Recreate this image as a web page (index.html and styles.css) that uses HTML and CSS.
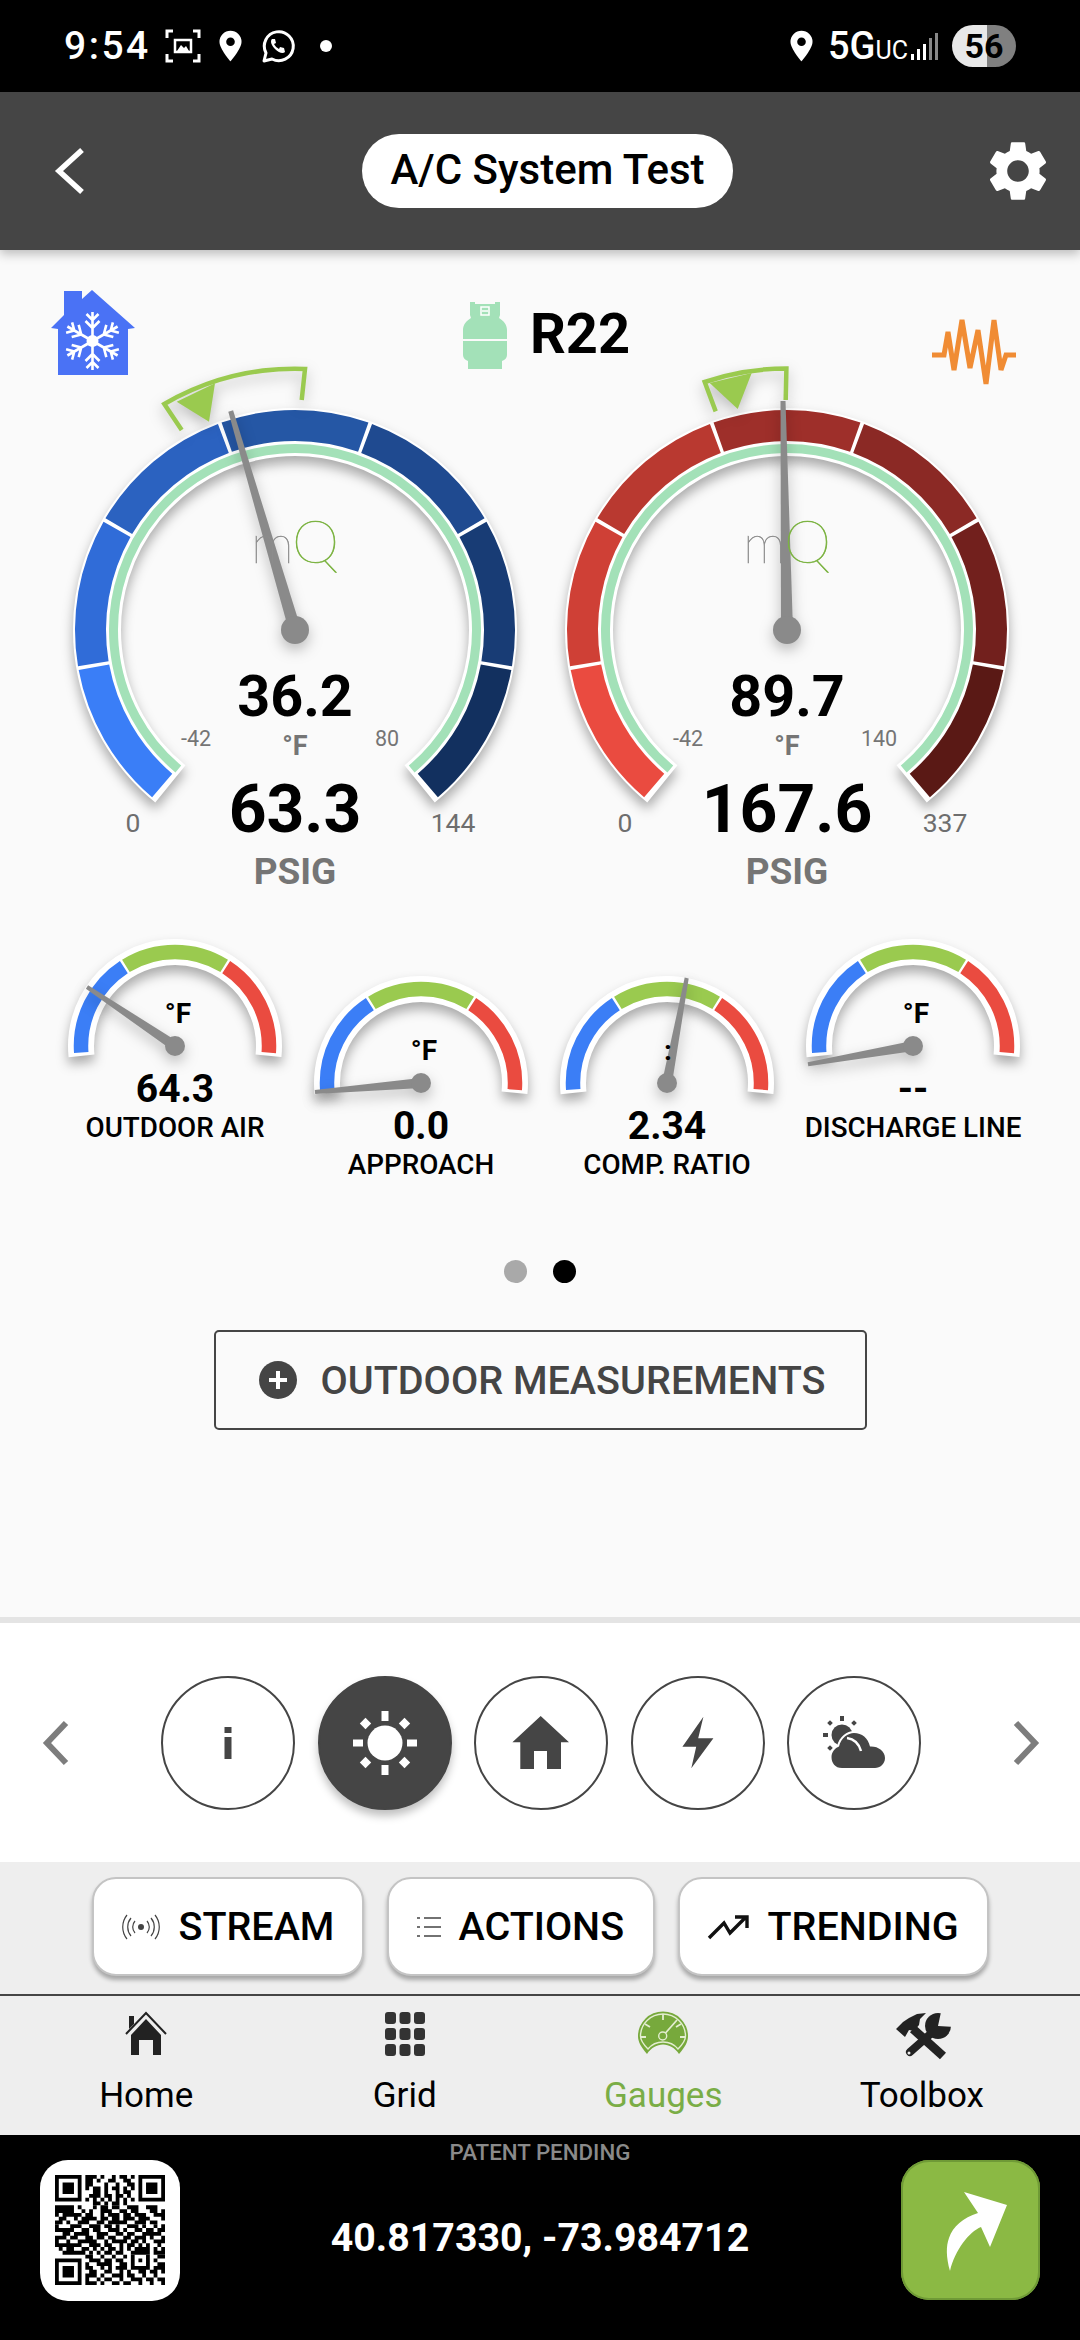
FILE: index.html
```html
<!DOCTYPE html>
<html lang="en">

<head>
    <meta charset="UTF-8">
    <meta name="viewport" content="width=device-width, initial-scale=1.0">
    <link rel="stylesheet" href="styles.css">
    <title>A/C System Test</title>
</head>

<body>
<div id="page">

    <!-- status bar -->
    <div class="status">
        <span class="clock">9:54</span>
        <svg class="st-shot" viewBox="0 0 36 34" fill="none" stroke="#fff" stroke-width="3">
            <path d="M8 2H2v7M28 2h6v7M8 32H2v-7M28 32h6v-7"/>
            <path d="M10 11h16v12H10z" stroke-width="2.5"/>
            <path d="M12 22l4-6 3 3 2-2 3 5z" fill="#fff" stroke="none"/>
        </svg>
        <svg class="st-pin" viewBox="0 0 24 32"><path fill="#fff" fill-rule="evenodd" d="M12 0a11.500 11.500 0 0 1 11.500 11.500C23.500 19 12 32 12 32S.5 19 .5 11.500A11.500 11.500 0 0 1 12 0zm0 7a4.500 4.500 0 1 0 0 9 4.500 4.500 0 0 0 0-9z"/></svg>
        <svg class="st-wa" viewBox="0 0 34 35" fill="none">
            <path d="M3 32l2-8A14.500 14.500 0 1 1 11 30z" stroke="#fff" stroke-width="3" stroke-linejoin="round"/>
            <path d="M11 10c-2 2-1 6 3 10s8 5 10 3l-1-4-4-1-1 2c-2-1-4-3-5-5l2-1-1-4z" fill="#fff"/>
        </svg>
        <span class="st-dot"></span>
        <span class="st-space"></span>
        <svg class="st-pin st-pin-r" viewBox="0 0 24 32"><path fill="#fff" fill-rule="evenodd" d="M12 0a11.500 11.500 0 0 1 11.500 11.500C23.500 19 12 32 12 32S.5 19 .5 11.500A11.500 11.500 0 0 1 12 0zm0 7a4.500 4.500 0 1 0 0 9 4.500 4.500 0 0 0 0-9z"/></svg>
        <span class="net">5G<small>UC</small></span>
        <svg class="st-signal" viewBox="0 0 27 27" fill="#fff">
            <rect x="0" y="21" width="3" height="6"/>
            <rect x="6" y="16" width="3" height="11"/>
            <rect x="12" y="11" width="3" height="16"/>
            <rect x="18" y="5" width="3" height="22" fill="#888"/>
            <rect x="24" y="0" width="3" height="27" fill="#888"/>
        </svg>
        <span class="batt">56</span>
    </div>

    <!-- app bar -->
    <div class="appbar">
        <svg class="back" viewBox="0 0 30 46" fill="none" stroke="#fff" stroke-width="5.500"><path d="M27 2L4 23l23 21"/></svg>
        <span class="title">A/C System Test</span>
        <svg class="gear" viewBox="0 0 24 24"><path fill="#fff" d="M19.14,12.94c0.04-0.3,0.06-0.61,0.06-0.94c0-0.32-0.02-0.64-0.07-0.94l2.03-1.58c0.18-0.14,0.23-0.41,0.12-0.61 l-1.92-3.32c-0.12-0.22-0.37-0.29-0.59-0.22l-2.39,0.96c-0.5-0.38-1.03-0.7-1.62-0.94L14.4,2.81c-0.04-0.24-0.24-0.41-0.48-0.41 h-3.84c-0.24,0-0.43,0.17-0.47,0.41L9.25,5.35C8.66,5.59,8.12,5.92,7.63,6.29L5.24,5.33c-0.22-0.08-0.47,0-0.59,0.22L2.74,8.87 C2.62,9.08,2.66,9.34,2.86,9.48l2.03,1.58C4.84,11.36,4.8,11.69,4.8,12s0.02,0.64,0.07,0.94l-2.03,1.58 c-0.18,0.14-0.23,0.41-0.12,0.61l1.92,3.32c0.12,0.22,0.37,0.29,0.59,0.22l2.39-0.96c0.5,0.38,1.03,0.7,1.62,0.94l0.36,2.54 c0.05,0.24,0.24,0.41,0.48,0.41h3.84c0.24,0,0.44-0.17,0.47-0.41l0.36-2.54c0.59-0.24,1.13-0.56,1.62-0.94l2.39,0.96 c0.22,0.08,0.47,0,0.59-0.22l1.92-3.32c0.12-0.22,0.07-0.47-0.12-0.61L19.14,12.94z M12,15.6c-1.98,0-3.6-1.62-3.6-3.6 s1.62-3.6,3.6-3.6s3.6,1.62,3.6,3.6S13.98,15.6,12,15.6z"/></svg>
    </div>

    <div class="main">
        <!-- refrigerant header -->
        <div class="head">
            <svg class="house" viewBox="0 0 84 85">
                <path fill="#4a72f5" d="M13 1h18v8L41 0l43 38-7 1v46H7V39l-7-1 13-13z"/>
                <g stroke="#fff" stroke-width="2.600" fill="none">
                    <g id="arm">
                        <path d="M41.500 51V22M41.500 30l-6-6M41.500 30l6-6M41.500 38l-7-7M41.500 38l7-7" stroke-width="2.600"/>
                    </g>
                    <use href="#arm" transform="rotate(60 41.500 51)"/>
                    <use href="#arm" transform="rotate(120 41.500 51)"/>
                    <use href="#arm" transform="rotate(180 41.500 51)"/>
                    <use href="#arm" transform="rotate(240 41.500 51)"/>
                    <use href="#arm" transform="rotate(300 41.500 51)"/>
                </g>
                <circle cx="41.500" cy="51" r="6" fill="#fff"/>
            </svg>
            <div class="refrig">
                <svg class="tank" viewBox="0 0 44 67">
                    <path fill="#a3e1b8" d="M7 0h5v2h20V0h5v13l-1 3c5 3 8 7 8 12v9h-44v-9c0-5 3-9 8-12l-1-3z"/>
                    <path fill="#a3e1b8" d="M0 39h44v14c0 3-2 5-5 6v8H5v-8c-3-1-5-3-5-6z"/>
                    <path fill="none" stroke="#fff" stroke-width="1.500" d="M18 5h8v8h-8zM19 9h6"/>
                </svg>
                <span class="r22">R22</span>
            </div>
            <svg class="wave" viewBox="0 0 84 68" fill="none" stroke="#f08c34" stroke-width="5">
                <polyline points="0,37 12,37 16,14 22,52 30,2 38,50 46,12 54,66 62,2 69,52 74,37 84,37"/>
            </svg>
        </div>

        <!-- big gauges -->
        <div class="bigrow">
            <svg class="big" viewBox="-246 -270 492 540">
                <g class="lift">
                    <circle class="rim" r="198" stroke-width="48" pathLength="360" stroke-dasharray="282 78" transform="rotate(129)"/>
                </g>
                <circle class="band" r="204.500" pathLength="360" stroke-dasharray="39 321" stroke="#3a7ef7" transform="rotate(130.500)"/>
                <circle class="band" r="204.500" pathLength="360" stroke-dasharray="39 321" stroke="#306cd8" transform="rotate(170.500)"/>
                <circle class="band" r="204.500" pathLength="360" stroke-dasharray="39 321" stroke="#2b62c0" transform="rotate(210.500)"/>
                <circle class="band" r="204.500" pathLength="360" stroke-dasharray="39 321" stroke="#2557a5" transform="rotate(250.500)"/>
                <circle class="band" r="204.500" pathLength="360" stroke-dasharray="39 321" stroke="#1f4a90" transform="rotate(290.500)"/>
                <circle class="band" r="204.500" pathLength="360" stroke-dasharray="39 321" stroke="#183c75" transform="rotate(330.500)"/>
                <circle class="band" r="204.500" pathLength="360" stroke-dasharray="39 321" stroke="#12305f" transform="rotate(10.500)"/>
                <circle class="ring" r="181.500" pathLength="360" stroke-dasharray="280 80" transform="rotate(130)"/>
                <g class="lift-s">
                    <path class="bracket" d="M-113.300-200L-130.700-226A261 261 0 0 1 10-261L6.700-230"/>
                    <path class="tri" d="M-118.300-228.300L-80-246.700L-86-208.300z"/>
                </g>
                <g class="lift-s">
                    <polygon class="needle" points="-61.900,-219.700 -66.700,-218.300 -5.800,1.700 5.800,-1.700"/>
                    <circle class="needle" r="14"/>
                </g>
                <text class="logo-m" x="-44" y="-67.500">m</text>
                <text class="logo-q" x="-3" y="-67.500">Q</text>
                <text class="t-val" y="86">36.2</text>
                <text class="t-unit" y="125">°F</text>
                <text class="t-press" y="202">63.3</text>
                <text class="t-psig" y="254">PSIG</text>
                <text class="t-in" x="-99" y="116">-42</text>
                <text class="t-in" x="92" y="116">80</text>
                <text class="t-out" x="-162" y="202">0</text>
                <text class="t-out" x="158" y="202">144</text>
            </svg>
            <svg class="big" viewBox="-246 -270 492 540">
                <g class="lift">
                    <circle class="rim" r="198" stroke-width="48" pathLength="360" stroke-dasharray="282 78" transform="rotate(129)"/>
                </g>
                <circle class="band" r="204.500" pathLength="360" stroke-dasharray="39 321" stroke="#ea4b40" transform="rotate(130.500)"/>
                <circle class="band" r="204.500" pathLength="360" stroke-dasharray="39 321" stroke="#cf4036" transform="rotate(170.500)"/>
                <circle class="band" r="204.500" pathLength="360" stroke-dasharray="39 321" stroke="#b93930" transform="rotate(210.500)"/>
                <circle class="band" r="204.500" pathLength="360" stroke-dasharray="39 321" stroke="#9e2f2a" transform="rotate(250.500)"/>
                <circle class="band" r="204.500" pathLength="360" stroke-dasharray="39 321" stroke="#8b2925" transform="rotate(290.500)"/>
                <circle class="band" r="204.500" pathLength="360" stroke-dasharray="39 321" stroke="#72201d" transform="rotate(330.500)"/>
                <circle class="band" r="204.500" pathLength="360" stroke-dasharray="39 321" stroke="#5a1915" transform="rotate(10.500)"/>
                <circle class="ring" r="181.500" pathLength="360" stroke-dasharray="280 80" transform="rotate(130)"/>
                <g class="lift-s">
                    <path class="bracket" d="M-71.300-218.600L-82.300-248A261 261 0 0 1-.6-261.400L-1.300-230"/>
                    <path class="tri" d="M-77.300-247L-35.300-257L-49.300-221z"/>
                </g>
                <g class="lift-s">
                    <polygon class="needle" points="-1.500,-229 -6.500,-229 -6,0 6,0"/>
                    <circle class="needle" r="14"/>
                </g>
                <text class="logo-m" x="-44" y="-67.500">m</text>
                <text class="logo-q" x="-3" y="-67.500">Q</text>
                <text class="t-val" y="86">89.7</text>
                <text class="t-unit" y="125">°F</text>
                <text class="t-press" y="202">167.6</text>
                <text class="t-psig" y="254">PSIG</text>
                <text class="t-in" x="-99" y="116">-42</text>
                <text class="t-in" x="92" y="116">140</text>
                <text class="t-out" x="-162" y="202">0</text>
                <text class="t-out" x="158" y="202">337</text>
            </svg>
        </div>

        <!-- small gauges -->
        <div class="smallrow">
            <div class="mini">
                <svg class="dial" viewBox="-123 -116 246 130">
                    <g class="lift"><circle class="rim" r="94" stroke-width="26" pathLength="360" stroke-dasharray="192 168" transform="rotate(174)"/></g>
                    <circle class="seg" r="94" pathLength="360" stroke-dasharray="61 299" stroke="#3b7ef6" transform="rotate(176)"/>
                    <circle class="seg" r="94" pathLength="360" stroke-dasharray="63 297" stroke="#9aca4f" transform="rotate(238.500)"/>
                    <circle class="seg" r="94" pathLength="360" stroke-dasharray="61 299" stroke="#ea4b40" transform="rotate(303)"/>
                    <text class="mini-unit" x="3" y="-23">°F</text>
                    <g class="lift-s">
                        <polygon class="needle" points="-86.900,-60.700 -89.100,-57.300 -2.800,4.200 2.800,-4.200"/>
                        <circle class="needle" r="10"/>
                    </g>
                </svg>
                <div class="mini-val">64.3</div>
                <div class="mini-lbl">OUTDOOR AIR</div>
            </div>
            <div class="mini low">
                <svg class="dial" viewBox="-123 -116 246 130">
                    <g class="lift"><circle class="rim" r="94" stroke-width="26" pathLength="360" stroke-dasharray="192 168" transform="rotate(174)"/></g>
                    <circle class="seg" r="94" pathLength="360" stroke-dasharray="61 299" stroke="#3b7ef6" transform="rotate(176)"/>
                    <circle class="seg" r="94" pathLength="360" stroke-dasharray="63 297" stroke="#9aca4f" transform="rotate(238.500)"/>
                    <circle class="seg" r="94" pathLength="360" stroke-dasharray="61 299" stroke="#ea4b40" transform="rotate(303)"/>
                    <text class="mini-unit" x="3" y="-23">°F</text>
                    <g class="lift-s">
                        <polygon class="needle" points="-105.800,11 -106.200,7 -.4,-5 .4,5"/>
                        <circle class="needle" r="10"/>
                    </g>
                </svg>
                <div class="mini-val">0.0</div>
                <div class="mini-lbl">APPROACH</div>
            </div>
            <div class="mini low">
                <svg class="dial" viewBox="-123 -116 246 130">
                    <g class="lift"><circle class="rim" r="94" stroke-width="26" pathLength="360" stroke-dasharray="192 168" transform="rotate(174)"/></g>
                    <circle class="seg" r="94" pathLength="360" stroke-dasharray="61 299" stroke="#3b7ef6" transform="rotate(176)"/>
                    <circle class="seg" r="94" pathLength="360" stroke-dasharray="63 297" stroke="#9aca4f" transform="rotate(238.500)"/>
                    <circle class="seg" r="94" pathLength="360" stroke-dasharray="61 299" stroke="#ea4b40" transform="rotate(303)"/>
                    <g class="lift-s">
                        <polygon class="needle" points="21.700,-104.600 17.700,-105.400 -4.900,-.9 4.900,.9"/>
                        <circle class="needle" r="10"/>
                    </g>
                    <text class="mini-unit" x="1" y="-23">:</text>
                </svg>
                <div class="mini-val">2.34</div>
                <div class="mini-lbl">COMP. RATIO</div>
            </div>
            <div class="mini">
                <svg class="dial" viewBox="-123 -116 246 130">
                    <g class="lift"><circle class="rim" r="94" stroke-width="26" pathLength="360" stroke-dasharray="192 168" transform="rotate(174)"/></g>
                    <circle class="seg" r="94" pathLength="360" stroke-dasharray="61 299" stroke="#3b7ef6" transform="rotate(176)"/>
                    <circle class="seg" r="94" pathLength="360" stroke-dasharray="63 297" stroke="#9aca4f" transform="rotate(238.500)"/>
                    <circle class="seg" r="94" pathLength="360" stroke-dasharray="61 299" stroke="#ea4b40" transform="rotate(303)"/>
                    <text class="mini-unit" x="3" y="-23">°F</text>
                    <g class="lift-s">
                        <polygon class="needle" points="-104.700,20.300 -105.300,16.300 -.9,-4.900 .9,4.900"/>
                        <circle class="needle" r="10"/>
                    </g>
                </svg>
                <div class="mini-val">--</div>
                <div class="mini-lbl">DISCHARGE LINE</div>
            </div>
        </div>

        <div class="pager">
            <span class="pdot"></span>
            <span class="pdot on"></span>
        </div>

        <div class="outdoor">
            <svg class="plus" viewBox="0 0 38 38">
                <circle cx="19" cy="19" r="19" fill="#454545"/>
                <path d="M19 10v18M10 19h18" stroke="#fff" stroke-width="4"/>
            </svg>
            <span>OUTDOOR MEASUREMENTS</span>
        </div>
    </div>

    <!-- section picker -->
    <div class="picker">
        <svg class="arrow arrow-l" viewBox="0 0 26 44" fill="none" stroke="#7d7d7d" stroke-width="6"><path d="M23 2L4 22l19 20"/></svg>
        <div class="circles">
            <div class="circle">
                <svg class="ic-info" viewBox="0 0 8 32" fill="#454545"><rect x="0.500" y="0" width="7" height="6"/><rect x="0.500" y="10" width="7" height="22"/></svg>
            </div>
            <div class="circle on">
                <svg class="ic-sun" viewBox="-34 -34 68 68" fill="#fff">
                    <circle r="17.500"/>
                    <rect x="-3.500" y="-32" width="7" height="10"/>
                    <rect x="-3.500" y="22" width="7" height="10"/>
                    <rect x="-32" y="-3.500" width="10" height="7"/>
                    <rect x="22" y="-3.500" width="10" height="7"/>
                    <rect x="15.500" y="-23.500" width="8" height="8" transform="rotate(45 19.500 -19.500)"/>
                    <rect x="-23.500" y="-23.500" width="8" height="8" transform="rotate(45 -19.500 -19.500)"/>
                    <rect x="15.500" y="15.500" width="8" height="8" transform="rotate(45 19.500 19.500)"/>
                    <rect x="-23.500" y="15.500" width="8" height="8" transform="rotate(45 -19.500 19.500)"/>
                </svg>
            </div>
            <div class="circle">
                <svg class="ic-home" viewBox="0 0 58 54"><path fill="#454545" d="M28.700 0L57 26.300h-8V53H35V35H22v18H8.300V26.300H.4z"/></svg>
            </div>
            <div class="circle">
                <svg class="ic-bolt" viewBox="0 0 34 54"><path fill="#454545" d="M22.400.7L17.200 22.300H32.400L10.300 52.300L15.200 30.700H1.400z"/></svg>
            </div>
            <div class="circle">
                <svg class="ic-wx" viewBox="0 0 62 54">
                    <g fill="#454545">
                        <circle cx="19" cy="19" r="10.500"/>
                        <rect x="17" y="0" width="4" height="5"/>
                        <rect x="0" y="17" width="5" height="4"/>
                        <rect x="5" y="5" width="4" height="4" transform="rotate(45 7 7)"/>
                        <rect x="29" y="5" width="4" height="4" transform="rotate(45 31 7)"/>
                        <rect x="5" y="30" width="4" height="4" transform="rotate(45 7 32)"/>
                    </g>
                    <path fill="#454545" stroke="#fff" stroke-width="4" paint-order="stroke" d="M19 52C12 52 8.500 47 8.500 41C8.500 36 12 32 16 30.500C18 22 25 17 31 17C39 17 45 22 47 30.500C55 30 62 35 62 42C62 48 57 52 52 52z"/>
                    <path fill="none" stroke="#fff" stroke-width="2.500" d="M24 22c7 1 12 6 14 13"/>
                </svg>
            </div>
        </div>
        <svg class="arrow arrow-r" viewBox="0 0 26 44" fill="none" stroke="#7d7d7d" stroke-width="6"><path d="M3 2l19 20L3 42"/></svg>
    </div>

    <!-- action buttons -->
    <div class="actions">
        <div class="btn btn-a">
            <svg class="ic-stream" viewBox="0 0 40 28" fill="none" stroke="#444" stroke-width="1.200">
                <circle cx="20" cy="14" r="3" fill="#444" stroke="none"/>
                <path d="M14 8a9 9 0 0 0 0 12M26 8a9 9 0 0 1 0 12M10 5a14 14 0 0 0 0 18M30 5a14 14 0 0 1 0 18M6 2a19 19 0 0 0 0 24M34 2a19 19 0 0 1 0 24"/>
            </svg>
            <span>STREAM</span>
        </div>
        <div class="btn btn-b">
            <svg class="ic-list" viewBox="0 0 24 22" stroke="#444" stroke-width="1.600">
                <path d="M0 2h3M0 11h3M0 20h3M7 2h17M7 11h17M7 20h17"/>
            </svg>
            <span>ACTIONS</span>
        </div>
        <div class="btn btn-c">
            <svg class="ic-trend" viewBox="0 0 42 26" fill="none" stroke="#111" stroke-width="3.400">
                <path d="M1 24L16 9l6 10L37 4M27 3h12v11"/>
            </svg>
            <span>TRENDING</span>
        </div>
    </div>

    <!-- tabs -->
    <div class="tabs">
        <div class="tab">
            <svg viewBox="0 0 42 46" class="tab-ic">
                <path fill="#222" d="M4 5h5v8l-5 5z"/>
                <path fill="none" stroke="#222" stroke-width="2" d="M1 23L21 2l20 21"/>
                <path fill="#222" fill-rule="evenodd" d="M21 8l15 16v20H28V29H14v15H6V24z"/>
            </svg>
            <span>Home</span>
        </div>
        <div class="tab">
            <svg viewBox="0 0 40 46" class="tab-ic" fill="#333">
                <rect x="0" y="1" width="11" height="12" rx="3"/><rect x="14.500" y="1" width="11" height="12" rx="3"/><rect x="29" y="1" width="11" height="12" rx="3"/>
                <rect x="0" y="17" width="11" height="12" rx="3"/><rect x="14.500" y="17" width="11" height="12" rx="3"/><rect x="29" y="17" width="11" height="12" rx="3"/>
                <rect x="0" y="33" width="11" height="12" rx="3"/><rect x="14.500" y="33" width="11" height="12" rx="3"/><rect x="29" y="33" width="11" height="12" rx="3"/>
            </svg>
            <span>Grid</span>
        </div>
        <div class="tab tab-on">
            <svg viewBox="0 0 52 46" class="tab-ic">
                <path fill="#77a93c" d="M10 43C4 36 1 31 1 25A25 24.500 0 0 1 51 25C51 31 48 36 42 43C38 37 32 33.500 26 33.500C20 33.500 14 37 10 43z"/>
                <g fill="none" stroke="#e3edd0" stroke-width="1.400">
                    <path d="M11 38C6 33 3.500 29 3.500 25A22.500 22 0 0 1 48.500 25C48.500 29 46 33 41 38C37 33 32 31 26 31C20 31 15 33 11 38z"/>
                    <circle cx="25.700" cy="25" r="4"/>
                    <path d="M28.500 22L40 9M26 3v6M8 13l5 3M44 13l-5 3M4 26h5M48 26h-5" stroke-width="1.800"/>
                </g>
            </svg>
            <span>Gauges</span>
        </div>
        <div class="tab">
            <svg viewBox="0 0 54 46" class="tab-ic">
                <path fill="#222" d="M1 18l7-7 6-4 8-4 9-1-6 6-1 6-5 6-5-1-4 7z"/>
                <path stroke="#222" stroke-width="9" d="M18 18l30 27"/>
                <path stroke="#222" stroke-width="8" stroke-linecap="round" d="M15 41L40 19"/>
                <circle cx="43" cy="15" r="13" fill="#222"/>
                <path fill="#eee" d="M43 15l3-14h14v15z"/>
                <circle cx="14" cy="42" r="1.500" fill="#eee"/>
            </svg>
            <span>Toolbox</span>
        </div>
    </div>

    <!-- footer -->
    <div class="foot">
        <div class="qr">
            <svg viewBox="0 0 29 29" fill="none" stroke="#000">
                <path d="M.5.5h6v6h-6zM22.500.5h6v6h-6zM.5 22.500h6v6h-6z"/>
                <path d="M2 3.500h3M24 3.500h3M2 25.500h3" stroke-width="3"/>
                <path d="M8 .5h3M12 .5h1M15 .5h1M17 .5h2M20 .5h1M8 1.500h2M11 1.500h1M14 1.500h2M18 1.500h2M8 2.500h2M13 2.500h1M16 2.500h1M19 2.500h2M8 3.500h1M10 3.500h2M13 3.500h1M15 3.500h2M18 3.500h1M20 3.500h1M10 4.500h2M13 4.500h1M16 4.500h1M18 4.500h2M9 5.500h3M13 5.500h2M16 5.500h2M19 5.500h1M8 6.500h1M10 6.500h1M12 6.500h1M14 6.500h1M16 6.500h1M18 6.500h1M20 6.500h1M10 7.500h2M13 7.500h1M15 7.500h2M18 7.500h1"/>
                <path d="M0 8.500h5M6 8.500h1M10 8.500h1M12 8.500h2M15 8.500h2M19 8.500h3M24 8.500h3M0 9.500h5M7 9.500h1M9 9.500h1M12 9.500h3M17 9.500h2M20 9.500h2M25 9.500h2M28 9.500h1M0 10.500h1M2 10.500h5M8 10.500h2M12 10.500h1M14 10.500h3M18 10.500h2M21 10.500h3M26 10.500h3M1 11.500h2M5 11.500h1M7 11.500h4M12 11.500h2M15 11.500h2M18 11.500h2M20 11.500h1M22 11.500h3M28 11.500h1M0 12.500h2M3 12.500h1M6 12.500h3M11 12.500h2M14 12.500h2M16 12.500h3M21 12.500h3M25 12.500h2"/>
                <path d="M0 13.500h1M4 13.500h3M9 13.500h3M13 13.500h2M16 13.500h1M19 13.500h3M23 13.500h1M26 13.500h1M28 13.500h1M0 14.500h5M7 14.500h2M10 14.500h2M14 14.500h3M18 14.500h1M21 14.500h2M24 14.500h2M27 14.500h2M2 15.500h2M5 15.500h4M11 15.500h3M16 15.500h2M19 15.500h2M23 15.500h5M0 16.500h3M4 16.500h2M8 16.500h2M11 16.500h2M14 16.500h2M18 16.500h2M21 16.500h3M25 16.500h1M28 16.500h1M0 17.500h1M3 17.500h1M6 17.500h5M13 17.500h1M15 17.500h4M20 17.500h2M23 17.500h1M26 17.500h3M0 18.500h7M9 18.500h3M13 18.500h2M17 18.500h1M19 18.500h2M22 18.500h1M24 18.500h1M27 18.500h1M1 19.500h1M3 19.500h2M7 19.500h2M10 19.500h1M12 19.500h1M14 19.500h2M17 19.500h1M19 19.500h1M21 19.500h4M26 19.500h1M28 19.500h1M2 20.500h6M9 20.500h1M11 20.500h1M13 20.500h2M16 20.500h2M20 20.500h5M26 20.500h3"/>
                <path d="M8 21.500h2M12 21.500h1M15 21.500h1M18 21.500h1M20 21.500h1M24 21.500h1M27 21.500h2M9 22.500h3M13 22.500h2M16 22.500h2M20 22.500h1M22 22.500h1M24 22.500h1M26 22.500h1M8 23.500h1M11 23.500h4M17 23.500h2M20 23.500h1M24 23.500h1M27 23.500h2M8 24.500h2M12 24.500h1M14 24.500h1M16 24.500h3M20 24.500h5M26 24.500h3M9 25.500h2M13 25.500h2M17 25.500h1M19 25.500h1M22 25.500h2M25 25.500h2M28 25.500h1M8 26.500h3M12 26.500h1M15 26.500h3M19 26.500h2M23 26.500h1M26 26.500h1M8 27.500h1M11 27.500h1M13 27.500h2M17 27.500h1M20 27.500h3M24 27.500h2M27 27.500h2M8 28.500h3M12 28.500h1M15 28.500h2M18 28.500h2M22 28.500h1M25 28.500h1M28 28.500h1"/>
            </svg>
        </div>
        <div class="foot-mid">
            <div class="patent">PATENT PENDING</div>
            <div class="coords">40.817330, -73.984712</div>
        </div>
        <div class="share">
            <svg viewBox="0 0 139 140"><path fill="#fff" d="M49 111C45 97 45 86 48 78C52 66 62 58 77 53L63 32L106 45L89 87L80 67C68 72 54 90 49 111z"/></svg>
        </div>
    </div>
</div>
</body>

</html>
```

FILE: styles.css
```css
* {
    margin: 0;
    padding: 0;
    box-sizing: border-box;
}

body {
    background: #000;
    font-family: Roboto, "Liberation Sans", sans-serif;
}

#page {
    width: 1080px;
    height: 2340px;
    display: flex;
    flex-direction: column;
    overflow: hidden;
}

svg {
    display: block;
    overflow: visible;
    flex: none;
}

/* status bar */
.status {
    height: 92px;
    background: #000;
    color: #fff;
    display: flex;
    align-items: center;
    padding: 0 64px 0 64px;
}

.clock {
    font-size: 39px;
    font-weight: 500;
    letter-spacing: 2.500px;
    width: 101px;
}

.st-shot {
    width: 36px;
    height: 34px;
}

.st-pin {
    width: 23px;
    height: 32px;
    margin-left: 18px;
}

.st-wa {
    width: 34px;
    height: 35px;
    margin-left: 19px;
}

.st-dot {
    width: 12px;
    height: 12px;
    border-radius: 50%;
    background: #fff;
    margin-left: 25px;
}

.st-space {
    flex: 1;
}

.st-pin-r {
    margin: 0 15px 0 0;
}

.net {
    font-size: 38px;
    font-weight: 500;
    width: 83px;
    white-space: nowrap;
}

.net small {
    font-size: 25px;
    font-weight: 400;
}

.st-signal {
    width: 27px;
    height: 27px;
    margin-right: 14px;
}

.batt {
    width: 64px;
    height: 42px;
    border-radius: 21px;
    background: linear-gradient(90deg, #e8e8e8 55%, #808080 55%);
    color: #000;
    font-size: 34px;
    font-weight: 700;
    line-height: 42px;
    text-align: center;
}

/* app bar */
.appbar {
    height: 158px;
    background: #454545;
    display: flex;
    align-items: center;
    justify-content: space-between;
    padding: 0 26px 0 55px;
    position: relative;
    box-shadow: 0 4px 10px rgba(0, 0, 0, .25);
    z-index: 1;
}

.back {
    width: 30px;
    height: 46px;
}

.title {
    width: 371px;
    height: 74px;
    margin-left: 28px;
    border-radius: 37px;
    background: #fff;
    color: #000;
    font-size: 42px;
    font-weight: 500;
    line-height: 72px;
    text-align: center;
}

.gear {
    width: 72px;
    height: 72px;
}

/* main area */
.main {
    height: 1367px;
    background: #fafafa;
    padding-top: 40px;
}

.head {
    height: 70px;
    display: flex;
    justify-content: space-between;
    padding: 0 64px 0 51px;
}

.house {
    width: 84px;
    height: 85px;
}

.refrig {
    display: flex;
    align-items: flex-start;
    margin: 12px 0 0 26px;
}

.tank {
    width: 44px;
    height: 67px;
}

.r22 {
    font-size: 56px;
    font-weight: 700;
    line-height: 64px;
    color: #000;
    margin-left: 23px;
}

.wave {
    width: 84px;
    height: 68px;
    margin-top: 28px;
}

.bigrow {
    display: flex;
    padding-left: 49px;
}

.big {
    width: 492px;
    height: 540px;
}

.lift {
    filter: drop-shadow(0 7px 6px rgba(0, 0, 0, .32));
}

.lift-s {
    filter: drop-shadow(0 6px 7px rgba(0, 0, 0, .25));
}

.rim {
    fill: none;
    stroke: #fff;
}

.band {
    fill: none;
    stroke-width: 31;
}

.ring {
    fill: none;
    stroke: #a3e1b8;
    stroke-width: 9;
}

.bracket {
    fill: none;
    stroke: #9aca4f;
    stroke-width: 4.500;
}

.tri {
    fill: #9aca4f;
}

.needle {
    fill: #8a8a8a;
}

.logo-m {
    font-family: Lato, Roboto, sans-serif;
    font-weight: 100;
    font-size: 54px;
    fill: #8c8c8c;
    stroke: #8c8c8c;
    stroke-width: .5;
}

.logo-q {
    font-family: Lato, Roboto, sans-serif;
    font-weight: 100;
    font-size: 60px;
    fill: #7cb342;
    stroke: #7cb342;
    stroke-width: .7;
}

.big text {
    text-anchor: middle;
}

.big .logo-m,
.big .logo-q {
    text-anchor: start;
}

.t-val {
    font-size: 57.500px;
    font-weight: 700;
    fill: #000;
}

.t-unit {
    font-size: 27px;
    font-weight: 700;
    fill: #757575;
}

.t-press {
    font-size: 66px;
    font-weight: 700;
    fill: #000;
}

.t-psig {
    font-size: 37px;
    font-weight: 700;
    fill: #757575;
}

.t-in {
    font-size: 21.500px;
    fill: #757575;
}

.t-out {
    font-size: 26.500px;
    fill: #6e6e6e;
}

.smallrow {
    display: flex;
    align-items: flex-start;
    margin-top: 30px;
    padding-left: 52px;
    height: 251px;
}

.mini {
    width: 246px;
    display: flex;
    flex-direction: column;
    align-items: center;
    text-align: center;
    color: #000;
}

.low {
    margin-top: 37px;
}

.dial {
    width: 246px;
    height: 130px;
}

.seg {
    fill: none;
    stroke-width: 14.500;
}

.mini-unit {
    font-size: 28px;
    font-weight: 700;
    fill: #000;
    text-anchor: middle;
}

.mini-val {
    margin-top: 7px;
    font-size: 39px;
    font-weight: 700;
    line-height: 44px;
    height: 44px;
}

.mini-lbl {
    font-size: 27.800px;
    font-weight: 500;
    line-height: 32px;
    margin-top: 1px;
    white-space: nowrap;
}

.pager {
    display: flex;
    justify-content: center;
    gap: 26px;
    margin-top: 79px;
}

.pdot {
    width: 23px;
    height: 23px;
    border-radius: 50%;
    background: #a9a9a9;
}

.pdot.on {
    background: #000;
}

.outdoor {
    width: 653px;
    height: 100px;
    margin: 47px auto 0;
    border: 2px solid #454545;
    border-radius: 5px;
    display: flex;
    align-items: center;
    padding-left: 43px;
    gap: 24px;
    color: #454545;
    font-size: 39.600px;
    font-weight: 500;
}

.plus {
    width: 38px;
    height: 38px;
}

/* section picker */
.picker {
    height: 245px;
    background: #fff;
    border-top: 6px solid #e4e4e4;
    display: flex;
    align-items: center;
    padding: 0 41px 0 43px;
    justify-content: space-between;
}

.arrow {
    width: 26px;
    height: 44px;
}

.circles {
    display: flex;
    gap: 22.500px;
}

.circle {
    width: 134px;
    height: 134px;
    border-radius: 50%;
    border: 2px solid #454545;
    display: flex;
    align-items: center;
    justify-content: center;
}

.circle.on {
    background: #454545;
    box-shadow: 0 6px 8px rgba(0, 0, 0, .25);
}

.ic-info {
    width: 8px;
    height: 32px;
}

.ic-sun {
    width: 68px;
    height: 68px;
}

.ic-home {
    width: 58px;
    height: 54px;
}

.ic-bolt {
    width: 34px;
    height: 54px;
}

.ic-wx {
    width: 62px;
    height: 54px;
}

/* action buttons */
.actions {
    height: 134px;
    background: #eee;
    border-bottom: 2px solid #454545;
    display: flex;
    justify-content: center;
    align-items: flex-start;
    gap: 23px;
    padding-top: 15px;
}

.btn {
    height: 99px;
    border-radius: 24px;
    background: #fff;
    border: 2px solid #c4c4c4;
    box-shadow: 0 4px 4px rgba(0, 0, 0, .3);
    display: flex;
    align-items: center;
    gap: 18px;
    color: #000;
    font-size: 39.500px;
    font-weight: 500;
}

.btn-a {
    width: 272px;
    padding-left: 27px;
}

.btn-b {
    width: 268px;
    padding-left: 28px;
}

.btn-c {
    width: 311px;
    padding-left: 28px;
}

.ic-stream {
    width: 40px;
    height: 28px;
}

.ic-list {
    width: 24px;
    height: 22px;
}

.ic-trend {
    width: 42px;
    height: 26px;
}

/* tabs */
.tabs {
    height: 139px;
    background: #eee;
    display: flex;
    padding: 15px 29px 0 17px;
}

.tab {
    flex: 1;
    display: flex;
    flex-direction: column;
    align-items: center;
    font-size: 35px;
    line-height: 40px;
    color: #000;
}

.tab-ic {
    height: 46px;
    margin-bottom: 19px;
}

.tab-on {
    color: #7aad46;
}

/* footer */
.foot {
    height: 205px;
    background: #000;
    display: grid;
    grid-template-columns: 139px 1fr 139px;
    padding: 25px 40px 0;
}

.qr {
    width: 140px;
    height: 141px;
    border-radius: 28px;
    background: #fff;
    padding: 15px;
}

.foot-mid {
    margin-top: -20px;
    text-align: center;
}

.patent {
    font-size: 22.300px;
    font-weight: 500;
    line-height: 25px;
    color: #8a8a8a;
}

.coords {
    margin-top: 50px;
    font-size: 39.300px;
    font-weight: 700;
    line-height: 46px;
    color: #fff;
}

.share {
    width: 139px;
    height: 140px;
    border-radius: 28px;
    background: #8bb944;
    box-shadow: inset 0 0 0 2px #6f9a36;
}
```
